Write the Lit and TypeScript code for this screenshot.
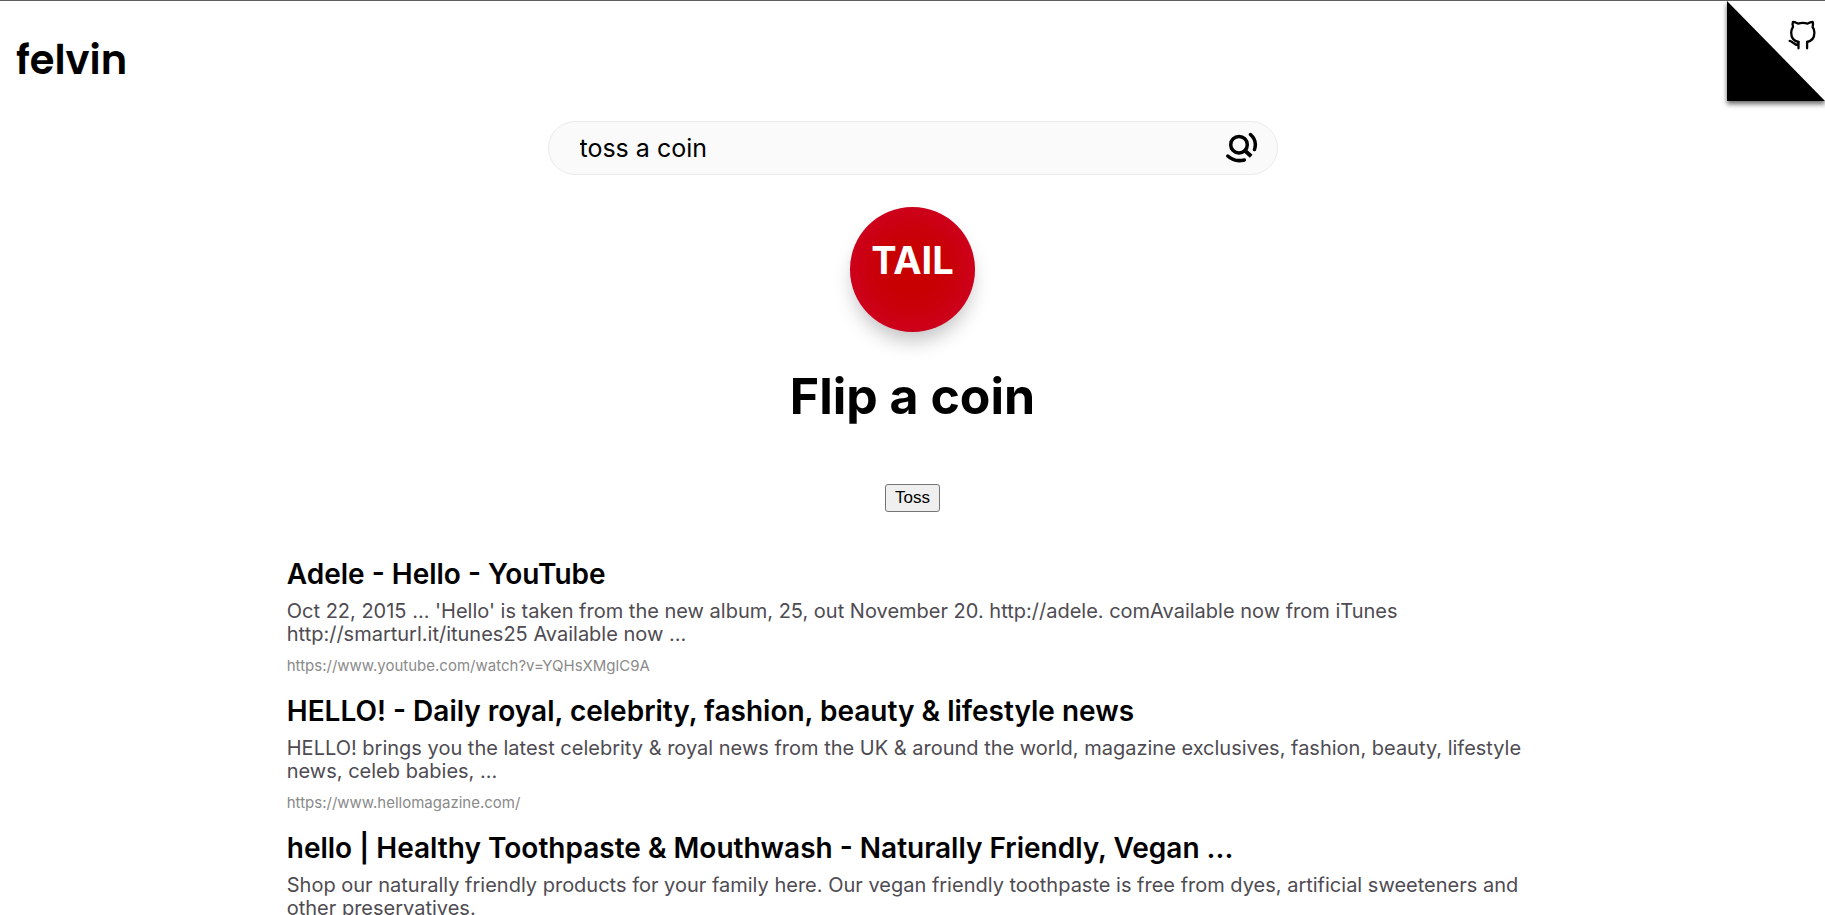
import { LitElement, html, css } from "lit";
import { customElement, property, state } from "lit/decorators.js";

interface Result {
  title: string;
  text: string;
  url: string;
}

const RESULTS: Result[] = [
  {
    title: "Adele - Hello - YouTube",
    text: "Oct 22, 2015 ... 'Hello' is taken from the new album, 25, out November 20. http://adele. comAvailable now from iTunes http://smarturl.it/itunes25 Available now ...",
    url: "https://www.youtube.com/watch?v=YQHsXMglC9A",
  },
  {
    title: "HELLO! - Daily royal, celebrity, fashion, beauty & lifestyle news",
    text: "HELLO! brings you the latest celebrity & royal news from the UK & around the world, magazine exclusives, fashion, beauty, lifestyle news, celeb babies, ...",
    url: "https://www.hellomagazine.com/",
  },
  {
    title: "hello | Healthy Toothpaste & Mouthwash - Naturally Friendly, Vegan ...",
    text: "Shop our naturally friendly products for your family here. Our vegan friendly toothpaste is free from dyes, artificial sweeteners and other preservatives.",
    url: "",
  },
];

@customElement("search-result")
export class SearchResult extends LitElement {
  @property({ attribute: false }) result!: Result;

  static styles = css`
    :host {
      display: block;
    }
    .title {
      display: block;
      font-size: 28px;
      line-height: 36px;
      font-weight: 600;
      color: #000;
      text-decoration: none;
    }
    .text {
      margin: 8px 0 10px;
      font-size: 20px;
      line-height: 23px;
      color: #4e4b52;
    }
    .url {
      display: block;
      font-size: 15px;
      line-height: 20px;
      font-style: normal;
      color: #8a8a8a;
    }
  `;

  render() {
    const { title, text, url } = this.result;
    return html`
      <a class="title" href=${url || "#"}>${title}</a>
      <p class="text">${text}</p>
      ${url ? html`<cite class="url">${url}</cite>` : ""}
    `;
  }
}

@customElement("coin-toss")
export class CoinToss extends LitElement {
  @state() private side = "TAIL";

  static styles = css`
    :host {
      display: flex;
      flex-direction: column;
      align-items: center;
    }
    .coin {
      box-sizing: border-box;
      width: 125px;
      height: 125px;
      padding-top: 30px;
      border-radius: 50%;
      background: #c80000;
      box-shadow:
        inset 0 0 45px rgba(255, 0, 255, 0.2),
        0 12px 20px -4px rgba(0, 0, 0, 0.25);
      color: #fff;
      font-size: 38px;
      line-height: 46px;
      font-weight: 700;
      text-align: center;
    }
    .heading {
      margin: 32px 0 56px;
      font-size: 50px;
      line-height: 64px;
      font-weight: 700;
    }
    .toss {
      padding: 4px 9px;
      border: 1px solid #767676;
      border-radius: 3px;
      background: #efefef;
      color: #000;
      font-family: "Liberation Sans", Arial, sans-serif;
      font-size: 17px;
      line-height: 18px;
    }
  `;

  private toss() {
    this.side = Math.random() < 0.5 ? "HEAD" : "TAIL";
  }

  render() {
    return html`
      <div class="coin">${this.side}</div>
      <h1 class="heading">Flip a coin</h1>
      <button class="toss" @click=${this.toss}>Toss</button>
    `;
  }
}

@customElement("app-root")
export class AppRoot extends LitElement {
  static styles = css`
    :host {
      display: block;
      position: relative;
      height: 100vh;
      overflow: hidden;
      box-sizing: border-box;
      border-top: 1px solid #5f5d60;
      background: #fff;
      color: #000;
      font-family: Inter, "Liberation Sans", sans-serif;
    }
    .header {
      padding: 33px 16px 35px;
    }
    .logo {
      display: inline-block;
      font-family: Poppins, Inter, sans-serif;
      font-size: 40px;
      line-height: 52px;
      font-weight: 600;
      color: #000;
      text-decoration: none;
    }
    .corner {
      position: absolute;
      top: 0;
      right: 0;
      width: 98px;
      height: 100px;
      background: #fff;
      box-shadow: 0 3px 5px rgba(0, 0, 0, 0.6);
      color: #000;
    }
    .corner svg {
      display: block;
      width: 100%;
      height: 100%;
    }
    .search {
      display: flex;
      align-items: center;
      box-sizing: border-box;
      width: 40%;
      height: 54px;
      margin: 0 auto 32px;
      padding: 0 19px 0 31px;
      border: 1px solid #ebebeb;
      border-radius: 27px;
      background: #fafafa;
    }
    .query {
      flex: 1;
      min-width: 0;
      padding: 0;
      border: 0;
      outline: 0;
      background: transparent;
      color: #000;
      font-family: inherit;
      font-size: 25px;
      line-height: 32px;
    }
    .go {
      display: flex;
      padding: 0;
      border: 0;
      background: transparent;
      color: #000;
    }
    .results {
      display: flex;
      flex-direction: column;
      gap: 17px;
      box-sizing: border-box;
      width: 70%;
      margin: 0 auto;
      padding: 44px 24px 0 13px;
    }
  `;

  render() {
    return html`
      <header class="header">
        <a class="logo" href="/">felvin</a>
      </header>
      <a class="corner" href="https://github.com/felvin-search" aria-label="GitHub">
        <svg viewBox="0 0 98 100" fill="none">
          <path d="M0 0 98 100H0Z" fill="#000" />
          <g transform="translate(53 11)" stroke="currentColor" stroke-width="2.300" stroke-linecap="round" stroke-linejoin="round">
            <path d="M18.500 30C13.500 29 11.200 25.500 11.200 20.500c0-2.500.7-4 1.800-5.500-.6-2-.5-4 0-5.200 2 0 3.500.8 5 1.800a17 17 0 0 1 9.600 0c1.500-1 3-1.800 5-1.800.5 1.200.6 3.200 0 5.200 1.100 1.500 1.800 3 1.800 5.500 0 5-2.300 8.500-7.300 9.500" />
            <path d="M18.500 30v6.300M27.100 30v6.300M9.700 28.800c3.500.4 3.300 4.200 8.800 4.200" />
          </g>
        </svg>
      </a>
      <form class="search" role="search" @submit=${(e: Event) => e.preventDefault()}>
        <input class="query" type="text" aria-label="Search" .value=${"toss a coin"} />
        <button class="go" aria-label="Search">
          <svg width="34" height="34" viewBox="0 0 34 34" fill="none" stroke="currentColor" stroke-width="3.500" stroke-linecap="round">
            <circle cx="15" cy="13.700" r="8.300" />
            <path d="M20.500 19.200 27.200 25.300" stroke-linecap="butt" stroke-width="4" />
            <path d="M26.500 3.500C31 7.500 32.300 13 30.500 18.500" />
            <path d="M3.800 25C8 29 14 30.500 20.300 29" />
          </svg>
        </button>
      </form>
      <coin-toss></coin-toss>
      <main class="results">
        ${RESULTS.map((r) => html`<search-result .result=${r}></search-result>`)}
      </main>
    `;
  }
}
